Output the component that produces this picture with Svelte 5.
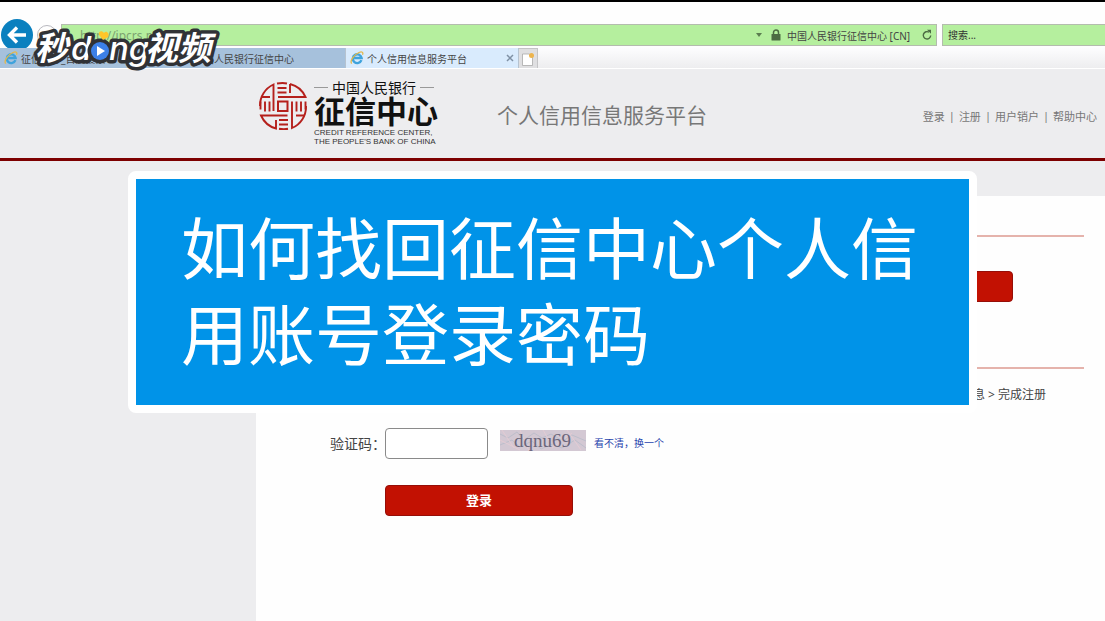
<script lang="ts">
  const tabs = [
    { title: '征信中心_百度搜索', active: false },
    { title: '中国人民银行征信中心', active: false },
    { title: '个人信用信息服务平台', active: true }
  ];
  const links = ['登录', '注册', '用户销户', '帮助中心'];

  let address = $state('http://ipcrs.p');
  let search = $state('');
  let captcha = $state('');
</script>

{#snippet ieIcon()}
  <svg class="ie" viewBox="0 0 14 14" aria-hidden="true">
    <path d="M11.4 9.2A4.4 4.4 0 1 1 11.6 7H4.2" fill="none" stroke="#3fa3dc" stroke-width="2.4" />
    <path d="M1.6 12.6C-.4 9.8 4 3.6 9 1.5c3-1.200 4.600-.2 3.500 2.300" fill="none" stroke="#e3b84b" stroke-width="1.300" />
  </svg>
{/snippet}

<div class="screen">
  <div class="browser">
    <div class="toolbar">
      <button class="back" aria-label="后退">
        <svg viewBox="0 0 32 32">
          <circle cx="16" cy="16" r="16" fill="#0a80bf" />
          <path d="M25 16H9M16 8.500 8.500 16l7.500 7.500" fill="none" stroke="#fff" stroke-width="3.400" />
        </svg>
      </button>
      <button class="forward" aria-label="前进"></button>
      <div class="address">
        <input type="text" aria-label="地址" bind:value={address} />
        <svg class="caret" viewBox="0 0 6 4"><path d="M0 0h6L3 4z" fill="#5b7d50" /></svg>
        <svg class="lock" viewBox="0 0 10 12">
          <path d="M2.500 6V3.500a2.500 2.500 0 0 1 5 0V6" fill="none" stroke="#4c6b43" stroke-width="1.500" />
          <rect x="0.500" y="5" width="9" height="6.500" rx="0.500" fill="#4c6b43" />
        </svg>
        <span class="owner">中国人民银行征信中心 [CN]</span>
        <svg class="reload" viewBox="0 0 10 12">
          <path d="M7 3.200A3.700 3.700 0 1 0 8.700 6.500" fill="none" stroke="#4c6b43" stroke-width="1.400" />
          <path d="M5 .8h4v4z" fill="#4c6b43" />
        </svg>
      </div>
      <input class="search" type="text" aria-label="搜索" placeholder="搜索..." bind:value={search} />
    </div>

    <div class="tabs">
      {#each tabs as tab}
        <div class="tab" class:active={tab.active}>
          {@render ieIcon()}
          <span>{tab.title}</span>
          {#if tab.active}
            <button class="close" aria-label="关闭">
              <svg viewBox="0 0 8 8"><path d="M1 1l6 6M7 1 1 7" stroke="#7f91a5" stroke-width="1.500" /></svg>
            </button>
          {/if}
        </div>
      {/each}
      <button class="new-tab" aria-label="新建标签页">
        <svg viewBox="0 0 14 14">
          <path d="M1.500 2h7l3 3v8.500h-10z" fill="#fff" stroke="#aaa" stroke-width=".8" />
          <circle cx="10.500" cy="3.500" r="2.500" fill="#edb44d" />
        </svg>
      </button>
    </div>
  </div>

  <header>
    <div class="logo">
      <svg class="seal" viewBox="0 0 48 48" fill="none" stroke="#b5201c" stroke-width="1.900" aria-hidden="true">
        <path d="M19 19.500h9.500v9.500H19z" stroke-width="2" />
        <!-- four arms turning round the centre -->
        <path d="M14.500 29V2.500A23 23 0 0 0 1 24" />
        <path d="M19 15h27.500A23 23 0 0 0 31 2M31 2v9" />
        <path d="M33 19.500v26.500A23 23 0 0 0 47 24" />
        <path d="M28.500 33.500H2A23 23 0 0 0 17 46.500V38" />
        <path d="M2 15h9M37 33.500h8" />
        <!-- stripes -->
        <path d="M18 1.500q6-1 10 0M18.500 6h9M18.500 10.500h9" />
        <path d="M37.500 19.500v10M42 19.500v10M46.500 19.500v8" />
        <path d="M20 38h9M20 42.500h9M20 46.800q5 .8 9 0" />
        <path d="M1.500 19.500v8M6 19.500v10M10.500 19.500v10" />
      </svg>
      <div class="wordmark">
        <div class="bank">中国人民银行</div>
        <div class="center">征信中心</div>
        <div class="english">CREDIT REFERENCE CENTER,</div>
        <div class="english">THE PEOPLE'S BANK OF CHINA</div>
      </div>
    </div>
    <h1>个人信用信息服务平台</h1>
    <nav>
      {#each links as link, i}
        {#if i > 0}<span>|</span>{/if}
        <a href="#top">{link}</a>
      {/each}
    </nav>
  </header>

  <main>
    <aside></aside>
    <div class="content">
      <form onsubmit={(e) => e.preventDefault()}>
        <div class="row">
          <label for="captcha">验证码：</label>
          <input id="captcha" type="text" bind:value={captcha} />
          <svg class="captcha" viewBox="0 0 86 21" role="img" aria-label="dqnu69">
            <rect width="86" height="21" fill="#d3c8d3" />
            <path d="M0 4l8 4 9-6 7 8 10-7 8 5 9-4 12 7 9-6 14 6M0 15l12-5 8 7 12-6 9 8 12-5 9 4 13-8 11 8" fill="none" stroke="#b8bbc9" stroke-width=".8" />
            <path d="M2 0l12 18M20 0l9 21M43 0l7 12M67 0l14 20M0 10l20 10M52 18l20-15" fill="none" stroke="#e3cbd3" />
            <text x="14" y="17">dqnu69</text>
          </svg>
          <a href="#captcha">看不清，换一个</a>
        </div>
        <button class="red" type="submit">登录</button>
      </form>

      <section class="register">
        <hr />
        <button class="red" aria-label="注册"></button>
        <hr />
        <p>息 &gt; 完成注册</p>
      </section>
    </div>
  </main>

  <div class="caption">如何找回征信中心个人信用账号登录密码</div>

  <svg class="watermark" viewBox="0 0 190 52" aria-label="秒dong视频">
    <g class="mark">
      <text class="hanzi" x="2" y="36">秒</text>
      <text class="latin" x="38" y="36">d</text>
      <circle cx="67" cy="27" r="9" fill="#fff" stroke="#303236" stroke-width="7" />
      <text class="latin" x="76" y="36">ng</text>
      <text class="hanzi" x="112" y="36">视频</text>
    </g>
    <circle cx="67" cy="27" r="9" fill="#3c80e8" />
    <path d="M64 22v10l8-5z" fill="#fff" />
    <path d="M70 16l-4-5c-1-4 3-5 5-2 2-3 6 0 4 4z" fill="#ffc629" />
  </svg>
</div>

<style>
  :global(body) {
    background: #fefefe;
  }

  .screen {
    position: relative;
    display: flex;
    flex-direction: column;
    min-height: 100vh;
    border-top: 2px solid #000;
    box-sizing: border-box;
    font-family: 'Noto Sans', 'Noto Sans CJK SC', sans-serif;
    font-size: 10px;
    color: #444;
  }

  button {
    padding: 0;
    border: 0;
    background: none;
    font-family: inherit;
  }

  input {
    box-sizing: border-box;
    min-width: 0;
    font-family: inherit;
    outline: 0;
  }

  svg {
    display: block;
    flex: none;
  }

  a {
    color: inherit;
    text-decoration: none;
  }

  /* browser chrome */
  .toolbar {
    display: flex;
    align-items: center;
    height: 46px;
    padding-top: 20px;
    box-sizing: border-box;
    background: #fefefe;
  }

  .back {
    flex: none;
    width: 32px;
    height: 32px;
    margin-left: 1px;
  }

  .forward {
    flex: none;
    width: 20px;
    height: 20px;
    margin: 0 4px;
    border: 1px solid #b8b8be;
    border-radius: 50%;
  }

  .address,
  .search {
    height: 22px;
    box-sizing: border-box;
    border: 1px solid #b4bcae;
    background: #b5ef9e;
  }

  .address {
    flex: 1;
    display: flex;
    align-items: center;
    padding: 0 4px 0 18px;
  }

  .address input {
    flex: 1;
    border: 0;
    padding: 0;
    background: none;
    font-size: 12px;
    color: #7ca270;
  }

  .caret {
    width: 6px;
    height: 4px;
  }

  .lock {
    width: 10px;
    height: 12px;
    margin: 0 6px 0 9px;
  }

  .owner {
    width: 131px;
    font-size: 10px;
    white-space: nowrap;
  }

  .reload {
    width: 10px;
    height: 12px;
    margin-left: 4px;
  }

  .search {
    flex: none;
    width: 163px;
    margin-left: 5px;
    padding: 0 5px;
    border-right: 0;
    font-size: 10px;
  }

  .search::placeholder {
    color: #333;
    opacity: 1;
  }

  .tabs {
    display: flex;
    height: 20px;
    border-bottom: 1px solid #fff;
    background: linear-gradient(#fdfdfe, #ededef);
  }

  .tab {
    display: flex;
    align-items: center;
    gap: 3px;
    width: 173px;
    padding: 0 4px;
    box-sizing: border-box;
    border-right: 1px solid #b6c3d0;
    background: #a6c1dc;
  }

  .tab.active {
    background: #d9ebfd;
  }

  .ie {
    width: 14px;
    height: 14px;
  }

  .close {
    width: 8px;
    height: 8px;
    margin-left: auto;
  }

  .new-tab {
    display: flex;
    align-items: center;
    justify-content: center;
    width: 19px;
    border: 1px solid #c4c4c6;
    border-width: 1px 1px 0 0;
    background: #dfdfe1;
  }

  .new-tab svg {
    width: 14px;
    height: 14px;
  }

  /* site header */
  header {
    display: flex;
    align-items: center;
    height: 92px;
    padding: 0 8px 0 259px;
    box-sizing: border-box;
    border-bottom: 3px solid #7d0000;
    background: #ededef;
  }

  .logo {
    display: flex;
    gap: 7px;
    width: 238px;
  }

  .seal {
    width: 48px;
    height: 48px;
  }

  .wordmark {
    color: #111;
  }

  .bank {
    display: flex;
    align-items: center;
    gap: 4px;
    font-size: 14px;
    line-height: 12px;
  }

  .bank::before,
  .bank::after {
    content: '';
    width: 14px;
    height: 1px;
    background: #999;
  }

  .center {
    font-size: 31px;
    line-height: 34px;
    font-weight: bold;
  }

  .english {
    font-family: 'Liberation Sans', sans-serif;
    font-size: 8px;
    line-height: 9px;
    color: #333;
    white-space: nowrap;
  }

  h1 {
    margin: 0;
    font-size: 21px;
    font-weight: 400;
    color: #777;
  }

  nav {
    display: flex;
    gap: 4px;
    margin-left: auto;
    padding-top: 4px;
    font-size: 11px;
    color: #777;
  }

  /* page body */
  main {
    flex: 1;
    display: flex;
    border-top: 35px solid #ededef;
  }

  aside {
    flex: none;
    width: 256px;
    background: #ededef;
  }

  .content {
    flex: 1;
    display: flex;
    justify-content: space-between;
    padding: 0 21px 0 74px;
    background: #fefefe;
  }

  form {
    padding-top: 232px;
  }

  .row {
    display: flex;
    align-items: center;
    height: 31px;
    margin-bottom: 26px;
  }

  label {
    width: 55px;
    padding-bottom: 2px;
    font-size: 14px;
    white-space: nowrap;
  }

  #captcha {
    width: 103px;
    height: 31px;
    border: 1px solid #8a8a8a;
    border-radius: 4px;
    background: #fff;
  }

  .captcha {
    width: 86px;
    height: 21px;
    margin: 0 8px 6px 12px;
  }

  .captcha text {
    font-family: 'Liberation Serif', serif;
    font-size: 19px;
    fill: #6b667b;
  }

  .row a {
    padding-bottom: 2px;
    color: #2743ad;
  }

  .red {
    display: block;
    width: 188px;
    height: 31px;
    padding-bottom: 2px;
    border: 1px solid #960e08;
    border-radius: 4px;
    background: #c21102;
    font-size: 13px;
    font-weight: bold;
    color: #fff;
  }

  form .red {
    margin-left: 55px;
  }

  .register {
    width: 300px;
    padding-top: 39px;
  }

  .register hr {
    height: 2px;
    margin: 0;
    border: 0;
    background: #e5b3ac;
  }

  .register .red {
    margin: 34px 71px 65px auto;
  }

  .register p {
    margin: 16px 38px 0 0;
    font-size: 12px;
    line-height: 20px;
    text-align: right;
  }

  /* video overlays */
  .caption {
    position: absolute;
    top: 169px;
    left: 128px;
    right: 128px;
    padding: 23px 45px 31px;
    box-sizing: border-box;
    border: 8px solid #fff;
    border-radius: 8px;
    background: #0093e8;
    font-family: 'Noto Sans CJK SC', sans-serif;
    font-size: 67px;
    font-weight: 400;
    line-height: 86px;
    color: #fff;
  }

  .watermark {
    position: absolute;
    top: 22px;
    left: 33px;
    width: 190px;
    height: 52px;
    overflow: visible;
  }

  .mark text {
    fill: #fff;
    stroke: #303236;
    stroke-width: 7px;
    stroke-linejoin: round;
    paint-order: stroke;
    font-style: italic;
    font-weight: bold;
  }

  .mark .hanzi {
    font-family: 'Noto Sans CJK SC', sans-serif;
    font-size: 33px;
  }

  .mark .latin {
    font-family: Inter, sans-serif;
    font-size: 33px;
    font-weight: 500;
  }
</style>
